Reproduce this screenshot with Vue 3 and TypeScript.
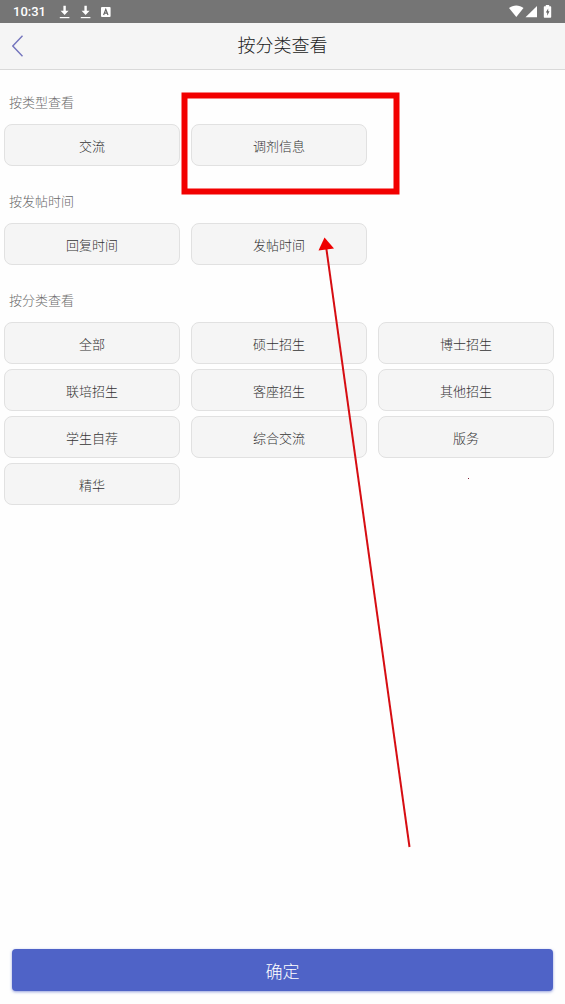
<script setup lang="ts">
import { ref } from 'vue'

interface FilterGroup {
  id: string
  title: string
  options: string[]
}

const groups: FilterGroup[] = [
  { id: 'type', title: '按类型查看', options: ['交流', '调剂信息'] },
  { id: 'time', title: '按发帖时间', options: ['回复时间', '发帖时间'] },
  {
    id: 'category',
    title: '按分类查看',
    options: [
      '全部', '硕士招生', '博士招生',
      '联培招生', '客座招生', '其他招生',
      '学生自荐', '综合交流', '版务',
      '精华',
    ],
  },
]

const selected = ref<Record<string, string>>({})

function choose(group: string, option: string): void {
  selected.value[group] = option
}
</script>

<template>
  <div class="page">
    <div class="status">
      <span class="clock">10:31</span>
      <svg v-for="n in 2" :key="n" class="download" width="11" height="14" viewBox="0 0 11 14" aria-hidden="true">
        <path d="M4.4.8h2.4v5h2.800L5.600 10 1.600 5.800h2.800z" fill="#fff" />
        <path d="M.8 12.600h9.600" stroke="#fff" stroke-width="1.2" />
      </svg>
      <svg class="badge" width="10" height="10" viewBox="0 0 10 10" aria-hidden="true">
        <rect width="9.600" height="10" rx="1" fill="#fff" />
        <path d="M2.600 8 4.800 2.400 7 8M3.400 6.200h2.800" fill="none" stroke="#666" stroke-width="1.2" />
      </svg>
      <svg class="signals" width="43" height="14" viewBox="0 0 43 14" aria-hidden="true">
        <path d="M0 3C4-.5 10.500-.5 14.500 3L7.300 12z" fill="#fff" />
        <path d="M28 1V12.200H16.500z" fill="#fff" />
        <path d="M36.800 1.200V0h3.400v1.200h1c.7 0 1 .4 1 1v9.500c0 .7-.4 1-1 1h-5.400c-.7 0-1-.4-1-1V2.200c0-.6.3-1 1-1z" fill="#fff" />
        <path d="M39.200 3.400 36.800 7.500h1.400v3.200l2.300-4.500h-1.300z" fill="#666" />
      </svg>
    </div>

    <header class="header">
      <button class="back" type="button" aria-label="返回">
        <svg width="12" height="22" viewBox="0 0 12 22" aria-hidden="true">
          <path d="M10.500.8.8 11l9.700 10.200" fill="none" stroke="#7475bd" stroke-width="1.4" />
        </svg>
      </button>
      <h1>按分类查看</h1>
    </header>

    <main class="content">
      <section v-for="group in groups" :key="group.id" class="group">
        <h2>{{ group.title }}</h2>
        <div class="options">
          <button
            v-for="option in group.options"
            :key="option"
            class="option"
            type="button"
            :aria-pressed="selected[group.id] === option"
            @click="choose(group.id, option)"
          >{{ option }}</button>
        </div>
      </section>
    </main>

    <footer class="footer">
      <button class="confirm" type="button">确定</button>
    </footer>

    <svg class="marks" width="565" height="1004" viewBox="0 0 565 1004" aria-hidden="true">
      <rect x="184.500" y="95.500" width="212" height="96" fill="none" stroke="#f20000" stroke-width="6" />
      <path d="M326 246 409.500 847" stroke="#d60d12" stroke-width="2" />
      <path d="M324.500 237.500 334 248.500 318.500 250.500z" fill="#ef0000" />
      <rect x="468" y="478" width="1" height="1" fill="#802034" />
    </svg>
  </div>
</template>

<style>
body {
  margin: 0;
}
</style>

<style scoped>
.page {
  position: relative;
  display: flex;
  flex-direction: column;
  min-height: 100vh;
  overflow: hidden;
  background: #fefefe;
  font-family: Roboto, "Noto Sans CJK SC", sans-serif;
}

button {
  margin: 0;
  padding: 0;
  font-family: inherit;
  cursor: pointer;
}

.status {
  display: flex;
  align-items: center;
  height: 23px;
  padding: 0 13px;
  background: #757575;
  color: #fff;
}

.clock {
  margin-right: 13px;
  font-size: 13px;
  font-weight: 500;
  line-height: 23px;
}

.download {
  margin-right: 10px;
}

.signals {
  margin-left: auto;
}

.header {
  display: grid;
  grid-template-columns: 46px 1fr 46px;
  align-items: center;
  height: 46px;
  border-bottom: 1px solid #d9d9d9;
  background: #f5f5f5;
}

.back {
  display: flex;
  align-items: center;
  height: 46px;
  padding-left: 12px;
  border: 0;
  background: none;
}

h1 {
  margin: 0;
  color: #222;
  font-size: 18px;
  font-weight: 300;
  line-height: 26px;
  text-align: center;
}

.content {
  display: flex;
  flex: 1;
  flex-direction: column;
  gap: 26px;
  padding: 23px 11px 23px 4px;
}

h2 {
  margin: 0 0 11px;
  padding-left: 5px;
  color: #6a6a6a;
  font-size: 13px;
  font-weight: 300;
  line-height: 20px;
}

.options {
  display: grid;
  grid-template-columns: repeat(3, 1fr);
  gap: 5px 11px;
}

.option {
  height: 42px;
  border: 1px solid #e1e1e1;
  border-radius: 8px;
  background: #f5f5f5;
  color: #333;
  font-size: 13px;
  font-weight: 300;
}

.footer {
  padding: 0 12px 13px;
}

.confirm {
  display: block;
  width: 100%;
  height: 42px;
  border: 0;
  border-radius: 4px;
  background: #4f63c7;
  box-shadow: 0 1px 3px #4f63c799;
  color: #fff;
  font-size: 17px;
  font-weight: 300;
}

.marks {
  position: absolute;
  top: 0;
  left: 0;
  pointer-events: none;
}
</style>
